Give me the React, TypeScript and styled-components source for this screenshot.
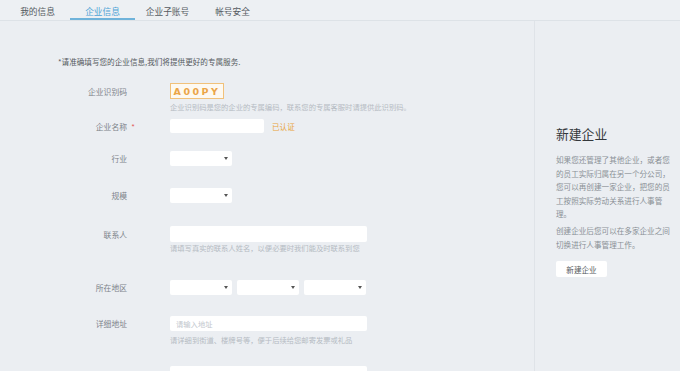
import React from 'react';
import styled, { createGlobalStyle } from 'styled-components';

const GlobalStyle = createGlobalStyle`
  html, body {
    margin: 0;
    padding: 0;
    background: #ebeef2;
    font-family: "Noto Sans CJK SC", "Noto Sans", sans-serif;
  }
`;

const Page = styled.div`
  width: 680px;
  height: 371px;
  overflow: hidden;
  display: flex;
  flex-direction: column;
  background: #ebeef2;
`;

const TabBar = styled.nav`
  height: 21px;
  flex: none;
  display: flex;
  padding-left: 5px;
  background: #edf0f3;
  border-bottom: 1px solid #dde2e7;
  box-sizing: border-box;
`;

const Tab = styled.div<{ $active?: boolean }>`
  width: 65px;
  height: 20px;
  box-sizing: border-box;
  display: flex;
  align-items: center;
  justify-content: center;
  font-size: 8.7px;
  padding-top: 4px;
  color: ${p => (p.$active ? '#4ea4d6' : '#555b62')};
  border-bottom: 2px solid ${p => (p.$active ? '#6fb3da' : 'transparent')};
`;

const Body = styled.div`
  flex: 1;
  display: flex;
`;

const Main = styled.section`
  width: 535px;
  border-right: 1px solid #dfe3e8;
  padding: 36px 0 0 58px;
  box-sizing: border-box;
`;

const Intro = styled.p`
  margin: 0;
  font-size: 7.6px;
  line-height: 10px;
  color: #555a60;
`;

const Field = styled.div<{ $gap: number }>`
  display: grid;
  grid-template-columns: 69px auto;
  column-gap: 43px;
  align-items: center;
  margin-top: ${p => p.$gap}px;
`;

const Label = styled.span`
  position: relative;
  text-align: right;
  font-size: 7.8px;
  color: #7d838a;
`;

const Star = styled.i`
  position: absolute;
  right: -8px;
  top: 0;
  font-style: normal;
  color: #e25c5c;
`;

const Hint = styled.div<{ $gap: number }>`
  margin: ${p => p.$gap}px 0 0 112px;
  font-size: 7.3px;
  line-height: 10px;
  color: #b5bbc2;
  white-space: nowrap;
`;

const Code = styled.div`
  width: 54px;
  height: 16px;
  box-sizing: border-box;
  border: 1px solid #f1c17a;
  background: #fdf9f1;
  color: #eba547;
  font-family: "DejaVu Sans", sans-serif;
  font-size: 9.5px;
  font-weight: bold;
  letter-spacing: 2.5px;
  display: flex;
  align-items: center;
  justify-content: center;
`;

const Inline = styled.div`
  display: flex;
  align-items: center;
  gap: 8px;
`;

const TextBox = styled.div<{ $w: number; $h: number }>`
  width: ${p => p.$w}px;
  height: ${p => p.$h}px;
  background: #ffffff;
  border-radius: 2px;
  box-sizing: border-box;
  padding-left: 6px;
  display: flex;
  align-items: center;
  font-size: 7.3px;
  color: #c2c7cd;
`;

const Verified = styled.span`
  font-size: 7.6px;
  color: #e9a43c;
`;

const Selects = styled.div`
  display: flex;
  gap: 5px;
`;

const Select = styled.div`
  width: 62px;
  height: 15px;
  background: #ffffff;
  border-radius: 2px;
  position: relative;
  &::after {
    content: '';
    position: absolute;
    right: 4px;
    top: 6px;
    border-left: 2px solid transparent;
    border-right: 2px solid transparent;
    border-top: 3px solid #555;
  }
`;

const Side = styled.aside`
  flex: 1;
  padding: 105px 0 0 21px;
`;

const SideTitle = styled.h2`
  margin: 0;
  font-size: 12.8px;
  line-height: 16px;
  font-weight: normal;
  color: #33373b;
`;

const SideText = styled.p<{ $gap: number }>`
  margin: ${p => p.$gap}px 0 0;
  width: 116px;
  font-size: 7.6px;
  line-height: 13.6px;
  color: #8a9096;
`;

const Button = styled.button`
  margin-top: 10px;
  width: 51px;
  height: 16px;
  padding: 0;
  border: none;
  border-radius: 2px;
  background: #ffffff;
  font-family: inherit;
  font-size: 7.6px;
  color: #555a60;
`;

const tabs = ['我的信息', '企业信息', '企业子账号', '帐号安全'];

export default function App() {
  return (
    <Page>
      <GlobalStyle />
      <TabBar>
        {tabs.map((t, i) => (
          <Tab key={t} $active={i === 1}>
            {t}
          </Tab>
        ))}
      </TabBar>
      <Body>
        <Main>
          <Intro>*请准确填写您的企业信息,我们将提供更好的专属服务.</Intro>

          <Field $gap={16}>
            <Label>企业识别码</Label>
            <Code>A00PY</Code>
          </Field>
          <Hint $gap={3}>企业识别码是您的企业的专属编码，联系您的专属客服时请提供此识别码。</Hint>

          <Field $gap={7}>
            <Label>
              企业名称<Star>*</Star>
            </Label>
            <Inline>
              <TextBox $w={94} $h={14} />
              <Verified>已认证</Verified>
            </Inline>
          </Field>

          <Field $gap={18}>
            <Label>行业</Label>
            <Select />
          </Field>

          <Field $gap={22}>
            <Label>规模</Label>
            <Select />
          </Field>

          <Field $gap={23}>
            <Label>联系人</Label>
            <TextBox $w={197} $h={16} />
          </Field>
          <Hint $gap={1}>请填写真实的联系人姓名，以便必要时我们能及时联系到您</Hint>

          <Field $gap={27}>
            <Label>所在地区</Label>
            <Selects>
              <Select />
              <Select />
              <Select />
            </Selects>
          </Field>

          <Field $gap={21}>
            <Label>详细地址</Label>
            <TextBox $w={197} $h={15}>请输入地址</TextBox>
          </Field>
          <Hint $gap={4}>请详细到街道、楼牌号等，便于后续给您邮寄发票或礼品</Hint>

          <Field $gap={21}>
            <span />
            <TextBox $w={197} $h={16} />
          </Field>
        </Main>
        <Side>
          <SideTitle>新建企业</SideTitle>
          <SideText $gap={11}>
            如果您还管理了其他企业，或者您的员工实际归属在另一个分公司，您可以再创建一家企业，把您的员工按照实际劳动关系进行人事管
            <br />
            理。
          </SideText>
          <SideText $gap={3}>创建企业后您可以在多家企业之间切换进行人事管理工作。</SideText>
          <Button>新建企业</Button>
        </Side>
      </Body>
    </Page>
  );
}
